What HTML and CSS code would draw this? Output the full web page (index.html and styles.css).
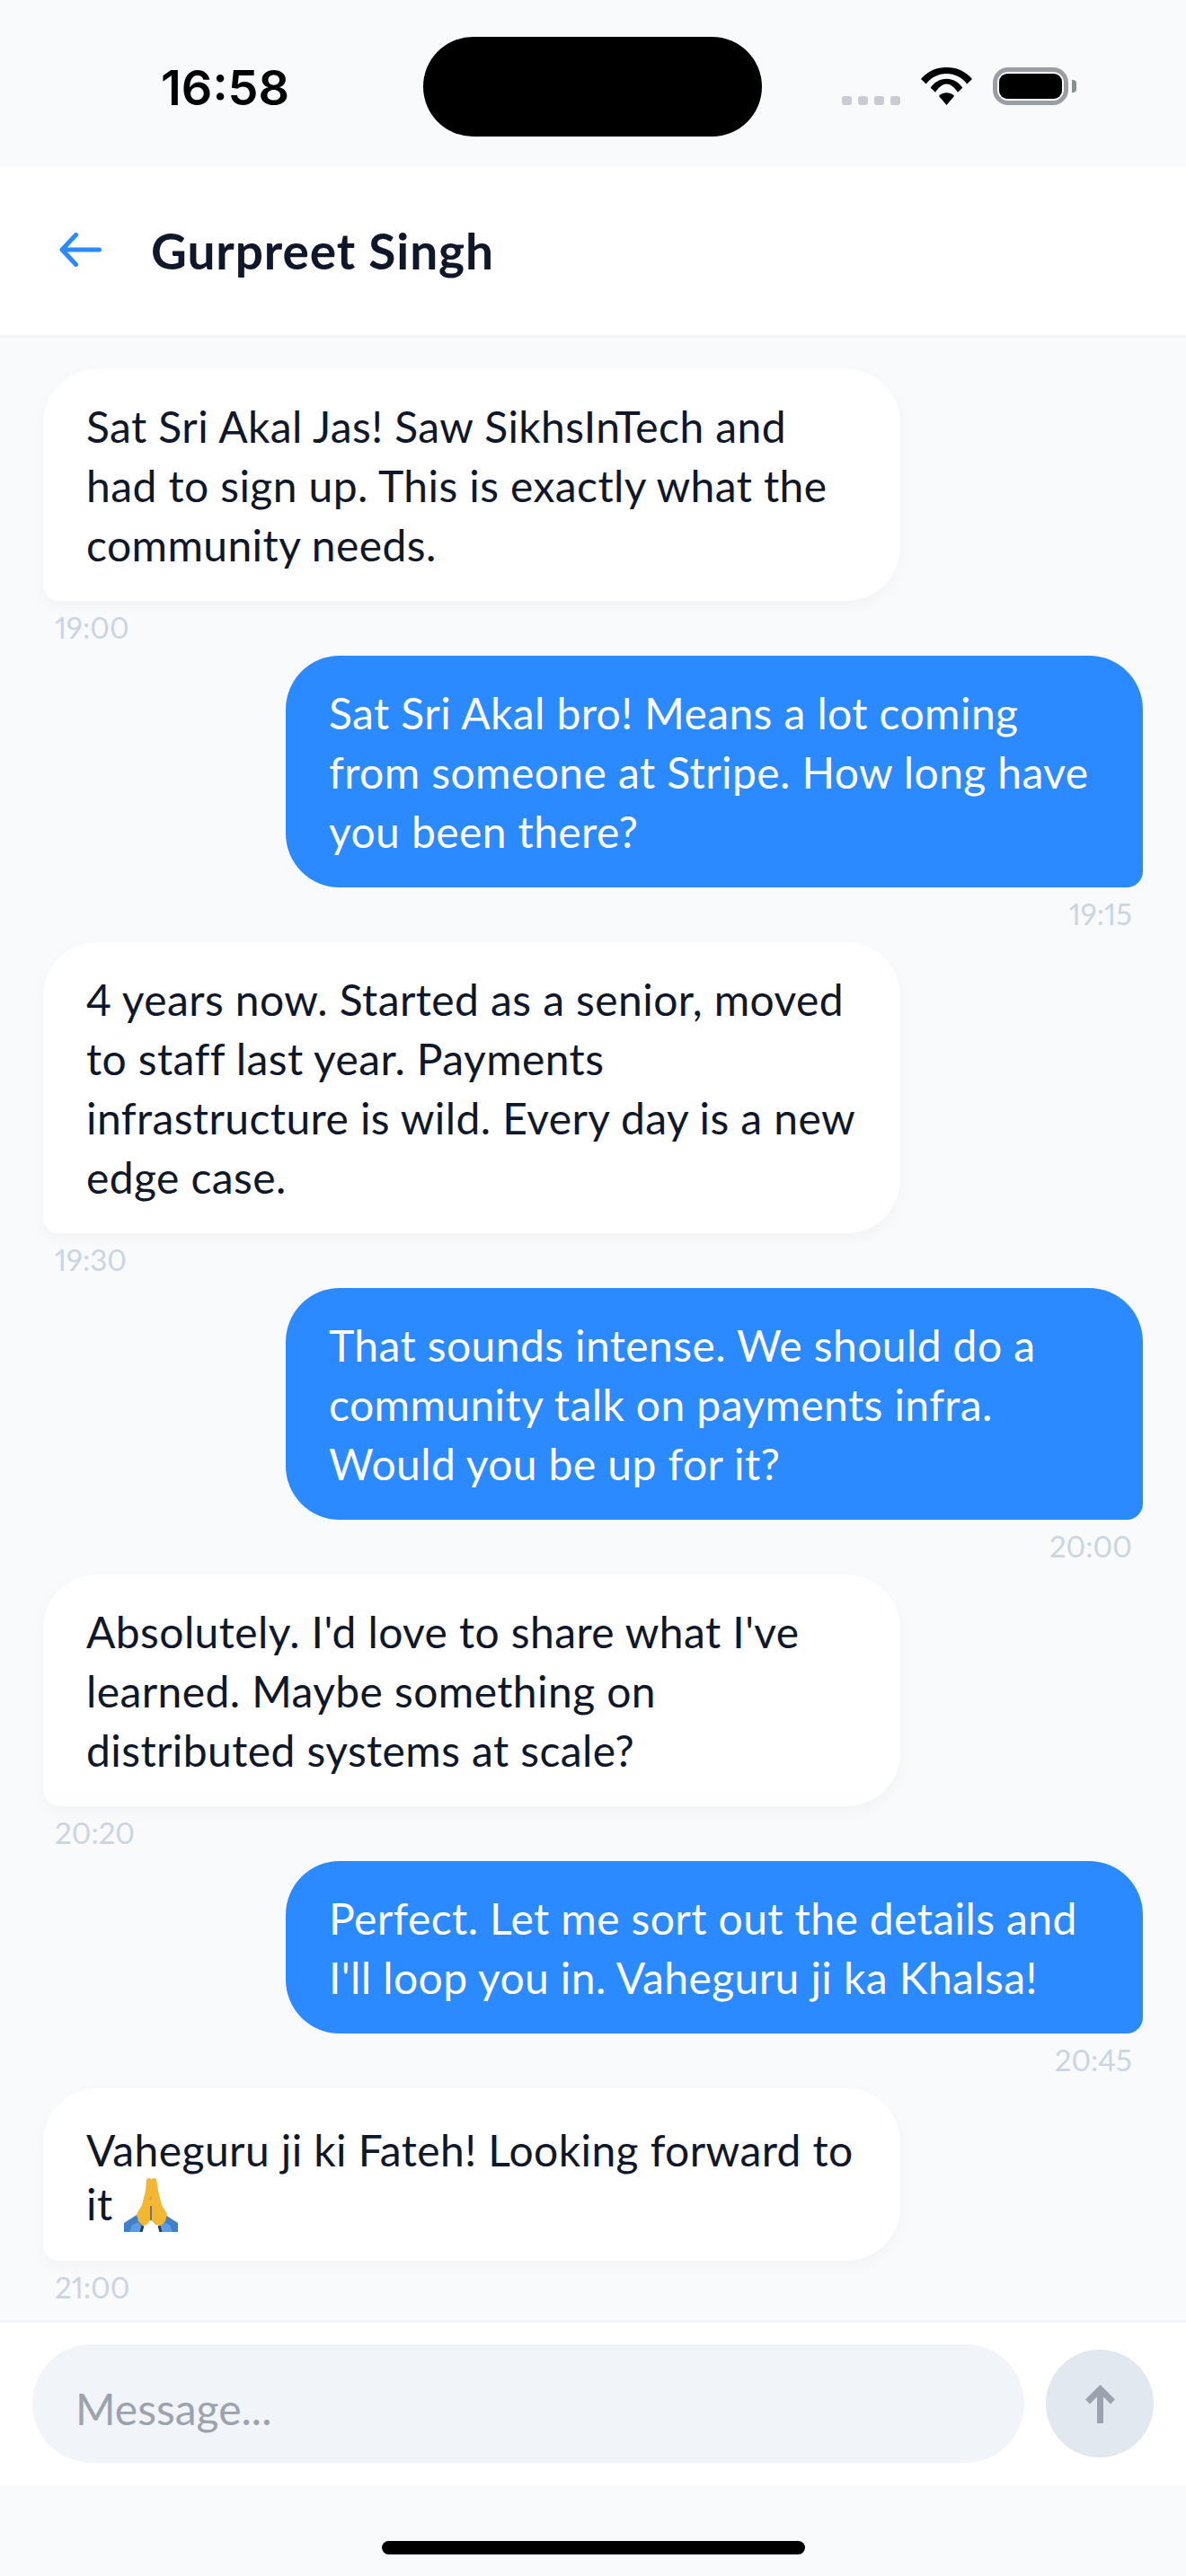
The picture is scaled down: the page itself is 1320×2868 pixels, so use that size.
FILE: index.html
```html
<!DOCTYPE html>
<html lang="en">
<head>
  <meta charset="UTF-8">
  <meta name="viewport" content="width=device-width, initial-scale=1.0">
  <title>Gurpreet Singh</title>
  <link rel="stylesheet" href="styles.css">
</head>
<body>
  <div class="status-bar">
    <div class="status-time">16:58</div>
    <div class="island"></div>
    <div class="status-icons">
      <div class="signal"><span></span><span></span><span></span><span></span></div>
      <svg class="wifi" viewBox="0 0 57 42">
        <path d="M0 13C7 4.500 17 0 28.500 0S50 4.500 57 13L51.300 18.500C45.500 11 37.500 7 28.500 7S11.500 11 5.700 18.500Z"/>
        <path d="M10.700 22.700C15 16.500 21 12.700 28.500 12.700S42 16.500 46.300 22.700L41 27.700C38 23.300 33.500 18.500 28.500 18.500S19 23.300 16 27.700Z"/>
        <path d="M20 32C22 29.500 25 28.300 28.500 28.300S35 29.500 37 32L28.500 42Z"/>
      </svg>
      <div class="battery"><div class="battery-fill"></div></div>
      <div class="battery-cap"></div>
    </div>
  </div>

  <header class="chat-header">
    <svg class="back-icon" viewBox="0 0 47 38">
      <path d="M44.500 19H3M18.500 2.500L3 19L18.500 35.500"/>
    </svg>
    <h1 class="chat-title">Gurpreet Singh</h1>
  </header>

  <main class="messages">
    <div class="msg">
      <div class="bubble">Sat Sri Akal Jas! Saw SikhsInTech and had to sign up. This is exactly what the community needs.</div>
      <div class="msg-time">19:00</div>
    </div>
    <div class="msg msg-me">
      <div class="bubble">Sat Sri Akal bro! Means a lot coming from someone at Stripe. How long have you been there?</div>
      <div class="msg-time">19:15</div>
    </div>
    <div class="msg">
      <div class="bubble">4 years now. Started as a senior, moved to staff last year. Payments infrastructure is wild. Every day is a new edge case.</div>
      <div class="msg-time">19:30</div>
    </div>
    <div class="msg msg-me">
      <div class="bubble">That sounds intense. We should do a community talk on payments infra. Would you be up for it?</div>
      <div class="msg-time">20:00</div>
    </div>
    <div class="msg">
      <div class="bubble">Absolutely. I'd love to share what I've learned. Maybe something on distributed systems at scale?</div>
      <div class="msg-time">20:20</div>
    </div>
    <div class="msg msg-me">
      <div class="bubble">Perfect. Let me sort out the details and I'll loop you in. Vaheguru ji ka Khalsa!</div>
      <div class="msg-time">20:45</div>
    </div>
    <div class="msg">
      <div class="bubble bubble-emoji">Vaheguru ji ki Fateh! Looking forward to it
        <svg class="emoji" viewBox="0 0 60 60" role="img" aria-label="folded hands">
          <path class="sleeve" d="M0 50L14 41L21 53L20 60H0Z"/>
          <path class="sleeve" d="M60 50L46 41L39 53L40 60H60Z"/>
          <path class="sleeve-light" d="M6 60L9 52L16 49L20 55L19 60Z"/>
          <path class="sleeve-light" d="M54 60L51 52L44 49L40 55L41 60Z"/>
          <path class="cuff" d="M21 53L19 60M39 53L41 60"/>
          <path class="hand" d="M25 1L28 0L30 1L33 0L36 1L38 14L42 30L48 40L46 48L41 53L35 52L30 46L25 52L21 53L16 48L14 40L20 30L24 14Z"/>
          <path class="fold" d="M30 31V47"/>
          <path class="fold-dot" d="M30 21V24"/>
        </svg>
      </div>
      <div class="msg-time">21:00</div>
    </div>
  </main>

  <form class="composer">
    <input class="composer-input" type="text" placeholder="Message...">
    <button class="send-btn" type="button">
      <svg viewBox="0 0 33 43"><path d="M16.500 43V5M2.500 19L16.500 5L30.500 19"/></svg>
    </button>
  </form>

  <div class="home-area"><div class="home-bar"></div></div>
</body>
</html>
```

FILE: styles.css
```css
* { box-sizing: border-box; }
html, body { margin: 0; padding: 0; }
body {
  width: 1320px;
  height: 2868px;
  display: flex;
  flex-direction: column;
  background: #f8fafc;
  color: #0f172a;
  font-family: Lato, "Noto Sans", sans-serif;
  overflow: hidden;
}

/* status bar */
.status-bar { height: 186px; display: flex; flex-shrink: 0; align-items: flex-start; }
.status-time {
  width: 471px;
  padding: 68px 0 0 179px;
  font-family: Inter, sans-serif;
  font-size: 54px;
  line-height: 60px;
  font-weight: 600;
  color: #000;
}
.island { width: 377px; height: 111px; margin-top: 41px; border-radius: 56px; background: #000; }
.status-icons { display: flex; align-items: flex-end; padding: 75px 0 0 89px; height: 117px; }
.signal { display: flex; gap: 7px; margin-right: 23px; }
.signal span { width: 11px; height: 10px; border-radius: 3px; background: #c8ccd2; }
.wifi { width: 57px; height: 42px; margin-right: 23px; fill: #000; }
.battery {
  width: 84px;
  height: 42px;
  padding: 2px;
  border: 5px solid #9a9da3;
  border-radius: 17px;
  background: #fff;
}
.battery-fill { height: 100%; border-radius: 9px; background: #000; }
.battery-cap {
  width: 5px;
  height: 14px;
  margin: 0 0 14px 4px;
  border-radius: 0 4px 4px 0;
  background: #8a8d93;
}

/* header */
.chat-header {
  height: 190px;
  flex-shrink: 0;
  display: flex;
  align-items: center;
  padding: 0 0 3px 66px;
  background: #fff;
  border-bottom: 3px solid #f1f5f9;
}
.back-icon { width: 47px; height: 38px; margin-right: 55px; fill: none; stroke: #2b8aff; stroke-width: 5px; stroke-linecap: round; stroke-linejoin: round; }
.chat-title { margin: 2px 0 0; font-size: 55px; line-height: 66px; font-weight: 700; letter-spacing: 0.9px; color: #0f172a; }

/* messages */
.messages { flex: 1; padding: 35px 48px 0; display: flex; flex-direction: column; gap: 12px; }
.msg { display: flex; flex-direction: column; align-items: flex-start; }
.msg-me { align-items: flex-end; }
.bubble {
  max-width: 954px;
  padding: 31px 48px 29px;
  font-size: 48px;
  line-height: 66px;
  letter-spacing: 0.4px;
  border-radius: 60px 60px 60px 18px;
  background: #fff;
  color: #0f172a;
  box-shadow: 0 6px 18px rgba(0, 0, 0, 0.03);
}
.msg-me .bubble { border-radius: 60px 60px 18px 60px; background: #2b8aff; color: #fff; box-shadow: none; }
.bubble-emoji { padding: 39px 48px 33px; line-height: 60px; }
.msg-time { margin: 9px 12px 0 13px; font-size: 33px; line-height: 40px; font-variant-numeric: proportional-nums; color: #cbd5e1; }
.emoji { width: 60px; height: 60px; margin: -4px 0; vertical-align: -9px; }
.sleeve { fill: #3f80c8; }
.sleeve-light { fill: #5a9ce8; }
.hand { fill: #f3b731; }
.fold { fill: none; stroke: #6f7480; stroke-width: 2px; }
.fold-dot { fill: none; stroke: #a8885a; stroke-width: 1px; }
.cuff { fill: none; stroke: #2c3e5a; stroke-width: 3px; }

/* composer */
.composer {
  height: 183px;
  flex-shrink: 0;
  display: flex;
  align-items: center;
  gap: 24px;
  padding: 0 36px;
  background: #fff;
  border-top: 3px solid #f1f5f9;
}
.composer-input {
  flex: 1;
  min-width: 0;
  height: 132px;
  padding: 10px 48px 0;
  border: 0;
  border-radius: 66px;
  background: #f1f5f9;
  font-family: inherit;
  font-size: 48px;
  color: #0f172a;
  outline: none;
}
.composer-input::placeholder { color: #9ca3af; opacity: 1; }
.send-btn {
  width: 120px;
  height: 120px;
  padding: 0;
  border: 0;
  border-radius: 50%;
  background: #e2e8f0;
  display: flex;
  align-items: center;
  justify-content: center;
}
.send-btn svg { width: 33px; height: 43px; fill: none; stroke: #9ca3af; stroke-width: 7px; }

/* home indicator */
.home-area { height: 102px; flex-shrink: 0; display: flex; justify-content: center; padding-top: 63px; }
.home-bar { width: 471px; height: 15px; border-radius: 8px; background: #000; }
```
